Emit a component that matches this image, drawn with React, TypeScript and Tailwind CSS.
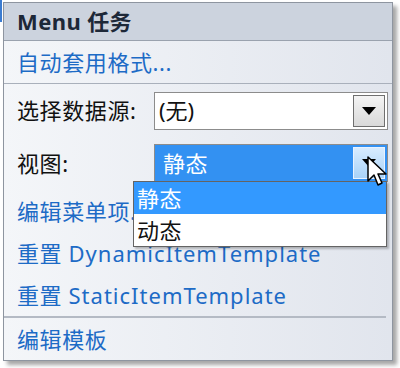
import React from 'react';

const font = { fontFamily: '"Noto Sans", "Noto Sans CJK SC", sans-serif' };

function DropButton({ active }: { active?: boolean }) {
  return (
    <div
      className={`flex h-[32px] w-[32px] items-center justify-center border ${
        active
          ? 'border-[#e8f2ff] bg-gradient-to-b from-[#d8ecff] to-[#a9d2f7]'
          : 'border-[#6f6f6f] bg-gradient-to-b from-[#f4f4f4] to-[#d9d9d9]'
      }`}
    >
      <svg width="14" height="8" viewBox="0 0 14 8">
        <path d="M0 0 H14 L7 8 Z" fill="#000" />
      </svg>
    </div>
  );
}

function LinkRow({ children }: { children: React.ReactNode }) {
  return (
    <div className="flex h-[42px] items-center px-[13px] text-[22px] tracking-[0.6px] text-[#1d6bc6] whitespace-nowrap">
      <span>{children}</span>
    </div>
  );
}

export default function App() {
  return (
    <div className="relative h-[368px] w-[400px] overflow-hidden bg-white" style={font}>
      <div className="absolute left-0 top-0 h-[22px] w-[2px] bg-[#3b7bd0]" />
      <div className="ml-[3px] mt-[2px] w-[390px] border border-[#8e95a0] bg-gradient-to-r from-[#f4f6f9] to-[#e1e5ed] shadow-[4px_4px_4px_rgba(0,0,0,0.35)]">
        {/* Header */}
        <div className="flex h-[38px] items-center border-b border-[#9aa2ae] bg-[#ccd3de] px-[13px] text-[22px] font-bold tracking-[0.4px] text-[#1d2838]">
          Menu 任务
        </div>

        <LinkRow>自动套用格式...</LinkRow>
        <div className="h-px bg-[#a9b0bb]" />

        {/* Data source */}
        <div className="flex h-[52px] items-center px-[13px] pt-[1px]">
          <span className="w-[137px] text-[22px] tracking-[0.6px] text-[#111]">选择数据源:</span>
          <div className="mr-[-9px] flex h-[38px] flex-1 items-center justify-between border border-[#8c8c8c] bg-white pl-[4px] pr-[2px]">
            <span className="text-[22px] text-[#111]">(无)</span>
            <DropButton />
          </div>
        </div>

        {/* View */}
        <div className="flex h-[54px] items-center px-[13px]">
          <span className="w-[137px] text-[22px] tracking-[0.6px] text-[#111]">视图:</span>
          <div className="mr-[-9px] flex h-[38px] flex-1 items-center justify-between border border-[#8c8c8c] bg-[#3391f2] pl-[8px] pr-[2px]">
            <span className="text-[22px] tracking-[0.6px] text-white">静态</span>
            <DropButton active />
          </div>
        </div>

        <LinkRow>编辑菜单项...</LinkRow>
        <LinkRow>
          重置 <span className="tracking-[1px]">DynamicItemTemplate</span>
        </LinkRow>
        <LinkRow>
          重置 <span className="tracking-[1px]">StaticItemTemplate</span>
        </LinkRow>
        <div className="mr-[6px] h-[2px] bg-[#b4bac4]" />
        <LinkRow>编辑模板</LinkRow>
      </div>

      {/* Open list */}
      <div className="absolute left-[133px] top-[181px] w-[254px] border border-[#646464] bg-white text-[22px] tracking-[0.6px] shadow-[2px_2px_2px_rgba(0,0,0,0.25)]">
        <div className="flex h-[32px] items-center bg-[#3399ff] px-[3px] text-white">静态</div>
        <div className="flex h-[32px] items-center px-[3px] text-[#111]">动态</div>
      </div>

      {/* Cursor */}
      <svg className="absolute left-[367px] top-[156px]" width="22" height="34" viewBox="0 0 22 34">
        <path
          d="M1 1 L1 25 L7 19 L11 29 L15 27 L11 18 L19 18 Z"
          fill="#fff"
          stroke="#000"
          strokeWidth="1.5"
          strokeLinejoin="round"
        />
      </svg>
    </div>
  );
}
